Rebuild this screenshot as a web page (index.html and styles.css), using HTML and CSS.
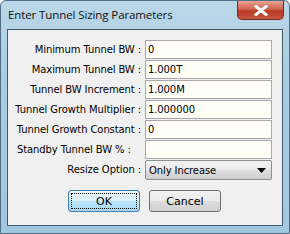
FILE: index.html
```html
<!DOCTYPE html>
<html>
<head>
<meta charset="utf-8">
<link rel="stylesheet" href="styles.css">
</head>
<body>
<div class="window">
  <div class="titlebar">
    <span class="title">Enter Tunnel Sizing Parameters</span>
    <div class="close"><svg width="14" height="11" viewBox="0 0 14 11"><path d="M2 1.5 L12 9.5 M12 1.5 L2 9.5" stroke="#fff" stroke-width="3" stroke-linecap="square" fill="none"/></svg></div>
  </div>
  <div class="client">
    <div class="form">
      <label class="lbl">Minimum Tunnel BW :</label><div class="field">0</div>
      <label class="lbl">Maximum Tunnel BW :</label><div class="field">1.000T</div>
      <label class="lbl">Tunnel BW Increment :</label><div class="field">1.000M</div>
      <label class="lbl">Tunnel Growth Multiplier :</label><div class="field">1.000000</div>
      <label class="lbl">Tunnel Growth Constant :</label><div class="field">0</div>
      <label class="lbl lbl-left">Standby Tunnel BW % :</label><div class="field"></div>
      <label class="lbl">Resize Option :</label><div class="select"><span>Only Increase</span><svg width="9" height="5" viewBox="0 0 9 5"><path d="M0 0 H9 L4.5 5 Z" fill="#000"/></svg></div>
    </div>
    <div class="buttons">
      <div class="btn btn-default"><span class="focus">OK</span></div>
      <div class="btn"><span>Cancel</span></div>
    </div>
  </div>
</div>
</body>
</html>
```
FILE: styles.css
```css
html, body { margin: 0; padding: 0; }
body { width: 290px; height: 234px; overflow: hidden; background: #fff; font-family: Tahoma, "DejaVu Sans", sans-serif; }
.window {
  width: 290px; height: 234px; box-sizing: border-box;
  background: linear-gradient(180deg, #bcd8e8 0%, #a9cde1 30%, #a0c8de 100%);
  border: 1px solid #4f6f86; border-radius: 6px 6px 0 0;
}
.titlebar { height: 28px; display: flex; align-items: flex-start; }
.title { font-family: "Open Sans", "DejaVu Sans", sans-serif; font-size: 11.5px; color: #111; margin: 6px 0 0 7px; letter-spacing: -0.1px; }
.close {
  margin-left: auto; margin-right: 5px; width: 47px; height: 19px; box-sizing: border-box;
  background: linear-gradient(180deg, #e8a597 0%, #d0634f 45%, #b83a25 55%, #c75440 100%);
  border: 1px solid #6d3026; border-top: none; border-radius: 0 0 5px 5px;
  display: flex; align-items: center; justify-content: center;
}
.client {
  margin: 0 6px; height: 197px; box-sizing: border-box;
  border: 1px solid #43596b; background: #f0f0f0;
  padding-top: 10px;
}
.form { display: grid; grid-template-columns: 133px 127px; column-gap: 4px; row-gap: 1px; }
.lbl { font-family: "DejaVu Sans", sans-serif; font-size: 10px; color: #000; text-align: right; height: 19px; line-height: 19px; white-space: nowrap; letter-spacing: -0.1px; }
.lbl-left { text-align: left; padding-left: 9px; }
.field {
  height: 19px; box-sizing: border-box; border: 1px solid #a8a8a8; background: #fffff7;
  font-family: "DejaVu Sans", sans-serif; font-size: 10px; line-height: 17px; padding-left: 2px; color: #000; letter-spacing: -0.1px;
}
.select {
  height: 20px; box-sizing: border-box; border: 1px solid #8e8f8f; border-radius: 2px;
  background: linear-gradient(180deg, #f2f2f2 0%, #ebebeb 50%, #dddddd 51%, #cfcfcf 100%);
  display: flex; align-items: center; justify-content: space-between; padding: 0 5px 0 3px;
  font-family: "DejaVu Sans", sans-serif; font-size: 10px; letter-spacing: -0.1px;
}
.buttons { display: flex; gap: 9px; margin: 10px 0 0 60px; }
.btn {
  width: 72px; height: 22px; box-sizing: border-box; border: 1px solid #707070; border-radius: 3px;
  background: linear-gradient(180deg, #f2f2f2 0%, #ebebeb 50%, #dddddd 51%, #cfcfcf 100%);
  display: flex; align-items: center; justify-content: center;
  font-family: "DejaVu Sans", sans-serif; font-size: 11px; color: #000;
}
.btn-default {
  border-color: #3c7fb1; padding: 2px;
  background: linear-gradient(180deg, #eaf6fd 0%, #d9f0fc 50%, #bee6fd 51%, #a7d9f5 100%);
}
.focus { flex: 1; align-self: stretch; display: flex; align-items: center; justify-content: center; border: 1px dotted #000; }
```
